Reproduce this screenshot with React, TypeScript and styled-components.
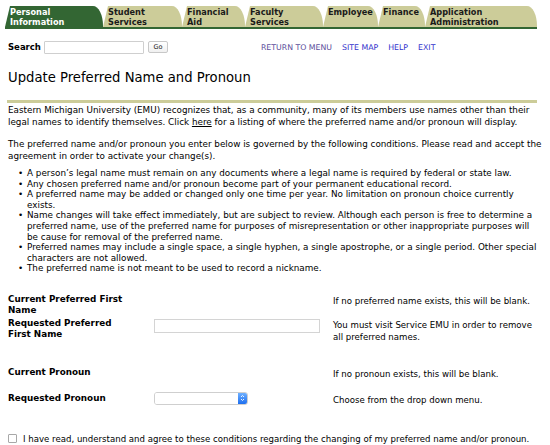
import React from 'react'
import styled, { createGlobalStyle } from 'styled-components'

const GlobalStyle = createGlobalStyle`
  html, body {
    margin: 0;
    padding: 0;
    background: #ffffff;
  }
  body {
    font-family: "DejaVu Sans", Verdana, sans-serif;
    color: #000000;
  }
`

const colors = {
  green: '#336633',
  tan: '#cccc99',
  link: '#3333cc',
  visited: '#5c4f9c',
}

const Page = styled.div`
  width: 550px;
  height: 445px;
  overflow: hidden;
  padding: 6px 0 0 0;
  box-sizing: border-box;
`

const TabBar = styled.div`
  display: flex;
  margin: 0 13px 0 5px;
  border-bottom: 2px solid ${colors.green};
`

const Tab = styled.div<{ $active?: boolean; $width: number }>`
  width: ${(p) => p.$width}px;
  height: 21px;
  box-sizing: border-box;
  padding: 1px 0 0 5px;
  background: ${(p) => (p.$active ? colors.green : colors.tan)};
  color: ${(p) => (p.$active ? '#ffffff' : '#1a1a1a')};
  font-size: 8.2px;
  font-weight: bold;
  line-height: 10px;
  border-top-right-radius: 10px 20px;
  clip-path: polygon(0 100%, 5px 0, 100% 0, 100% 100%);
`

const SearchBar = styled.div`
  display: flex;
  align-items: center;
  padding: 11px 0 0 8px;
  height: 14px;
`

const SearchLabel = styled.label`
  font-size: 8.5px;
  font-weight: bold;
  margin-right: 3px;
`

const SearchInput = styled.input`
  width: 100px;
  height: 13px;
  box-sizing: border-box;
  border: 1px solid #cfcfcf;
  border-radius: 1px;
  padding: 0;
`

const GoButton = styled.button`
  margin-left: 4px;
  width: 20px;
  height: 12px;
  padding: 0;
  font-family: inherit;
  font-size: 6.5px;
  color: #222;
  background: linear-gradient(#ffffff, #f0f0f0);
  border: 1px solid #c8c8c8;
  border-radius: 2px;
`

const NavLinks = styled.div`
  display: flex;
  gap: 10px;
  margin-left: 93px;
`

const NavLink = styled.a<{ $visited?: boolean }>`
  font-size: 7.8px;
  color: ${(p) => (p.$visited ? colors.visited : colors.link)};
  text-decoration: none;
`

const Title = styled.h1`
  margin: 0;
  padding: 15px 0 0 8px;
  font-size: 13.2px;
  font-weight: normal;
  line-height: 17px;
`

const Rule = styled.div`
  margin: 14px 13px 0 7px;
  height: 3px;
  background: ${colors.tan};
`

const Body = styled.div`
  padding: 0 8px;
  font-size: 8.8px;
  line-height: 12px;
`

const Para = styled.p`
  margin: 1px 0 0 0;
  & + & {
    margin-top: 10px;
  }
`

const Here = styled.span`
  text-decoration: underline;
`

const Conditions = styled.ul`
  margin: 6px 0 0 0;
  padding-left: 19px;
  list-style: none;
  line-height: 10.6px;
`

const Condition = styled.li`
  position: relative;
  &::before {
    content: '•';
    position: absolute;
    left: -9px;
  }
`

const FormGrid = styled.div`
  display: grid;
  grid-template-columns: 146px 179px 1fr;
  row-gap: 1px;
  margin-top: 20px;
  align-items: start;
`

const Label = styled.div`
  font-size: 8.8px;
  font-weight: bold;
  line-height: 11.5px;
`

const Hint = styled.div`
  font-size: 8.6px;
  line-height: 12px;
  padding-top: 1px;
`

const Spacer = styled.div<{ $h: number }>`
  grid-column: 1 / -1;
  height: ${(p) => p.$h}px;
`

const NameInput = styled.input`
  width: 166px;
  height: 14px;
  box-sizing: border-box;
  border: 1px solid #d4d4d4;
  padding: 0;
  margin-top: 1px;
`

const SelectBox = styled.div`
  display: flex;
  width: 94px;
  height: 13px;
  box-sizing: border-box;
  border: 1px solid #cfcfcf;
  border-radius: 3px;
  overflow: hidden;
  margin-top: -1px;
`

const SelectField = styled.div`
  flex: 1;
  background: #ffffff;
`

const SelectStepper = styled.div`
  width: 9px;
  background: linear-gradient(#6fb0ff, #1d6ff0);
  display: flex;
  align-items: center;
  justify-content: center;
`

const AgreeRow = styled.label`
  display: flex;
  align-items: center;
  margin-top: 28px;
  padding-left: 8px;
  font-size: 8.6px;
  white-space: nowrap;
`

const CheckBox = styled.span`
  flex: none;
  width: 7px;
  height: 7px;
  border: 1px solid #a8a8a8;
  border-radius: 1px;
  margin-right: 6px;
  background: #fff;
`

const tabs = [
  { label: ['Personal', 'Information'], width: 98, active: true },
  { label: ['Student', 'Services'], width: 79 },
  { label: ['Financial', 'Aid'], width: 63 },
  { label: ['Faculty', 'Services'], width: 78 },
  { label: ['Employee'], width: 55 },
  { label: ['Finance'], width: 47 },
  { label: ['Application', 'Administration'], width: 112 },
]

const conditions = [
  'A person\u2019s legal name must remain on any documents where a legal name is required by federal or state law.',
  'Any chosen preferred name and/or pronoun become part of your permanent educational record.',
  'A preferred name may be added or changed only one time per year. No limitation on pronoun choice currently exists.',
  'Name changes will take effect immediately, but are subject to review. Although each person is free to determine a preferred name, use of the preferred name for purposes of misrepresentation or other inappropriate purposes will be cause for removal of the preferred name.',
  'Preferred names may include a single space, a single hyphen, a single apostrophe, or a single period. Other special characters are not allowed.',
  'The preferred name is not meant to be used to record a nickname.',
]

export default function App() {
  return (
    <Page>
      <GlobalStyle />
      <TabBar>
        {tabs.map((t) => (
          <Tab key={t.label.join(' ')} $active={t.active} $width={t.width}>
            {t.label.map((l) => (
              <div key={l}>{l}</div>
            ))}
          </Tab>
        ))}
      </TabBar>
      <SearchBar>
        <SearchLabel>Search</SearchLabel>
        <SearchInput />
        <GoButton>Go</GoButton>
        <NavLinks>
          <NavLink $visited>RETURN TO MENU</NavLink>
          <NavLink>SITE MAP</NavLink>
          <NavLink>HELP</NavLink>
          <NavLink>EXIT</NavLink>
        </NavLinks>
      </SearchBar>
      <Title>Update Preferred Name and Pronoun</Title>
      <Rule />
      <Body>
        <Para>
          Eastern Michigan University (EMU) recognizes that, as a community, many of its members use names other than
          their legal names to identify themselves. Click <Here>here</Here> for a listing of where the preferred name
          and/or pronoun will display.
        </Para>
        <Para>
          The preferred name and/or pronoun you enter below is governed by the following conditions. Please read and
          accept the agreement in order to activate your change(s).
        </Para>
        <Conditions>
          {conditions.map((c) => (
            <Condition key={c}>{c}</Condition>
          ))}
        </Conditions>
        <FormGrid>
          <Label>
            Current Preferred First
            <br />
            Name
          </Label>
          <div />
          <Hint>If no preferred name exists, this will be blank.</Hint>
          <Label>
            Requested Preferred
            <br />
            First Name
          </Label>
          <div>
            <NameInput />
          </div>
          <Hint>
            You must visit Service EMU in order to remove
            <br />
            all preferred names.
          </Hint>
          <Spacer $h={22} />
          <Label>Current Pronoun</Label>
          <div />
          <Hint>If no pronoun exists, this will be blank.</Hint>
          <Spacer $h={11} />
          <Label>Requested Pronoun</Label>
          <div>
            <SelectBox>
              <SelectField />
              <SelectStepper>
                <svg width="5" height="8" viewBox="0 0 5 8">
                  <path d="M1 3 L2.5 1.5 L4 3 M1 5 L2.5 6.5 L4 5" stroke="#fff" strokeWidth="0.9" fill="none" />
                </svg>
              </SelectStepper>
            </SelectBox>
          </div>
          <Hint>Choose from the drop down menu.</Hint>
        </FormGrid>
      </Body>
      <AgreeRow>
        <CheckBox />
        I have read, understand and agree to these conditions regarding the changing of my preferred name and/or
        pronoun.
      </AgreeRow>
    </Page>
  )
}
